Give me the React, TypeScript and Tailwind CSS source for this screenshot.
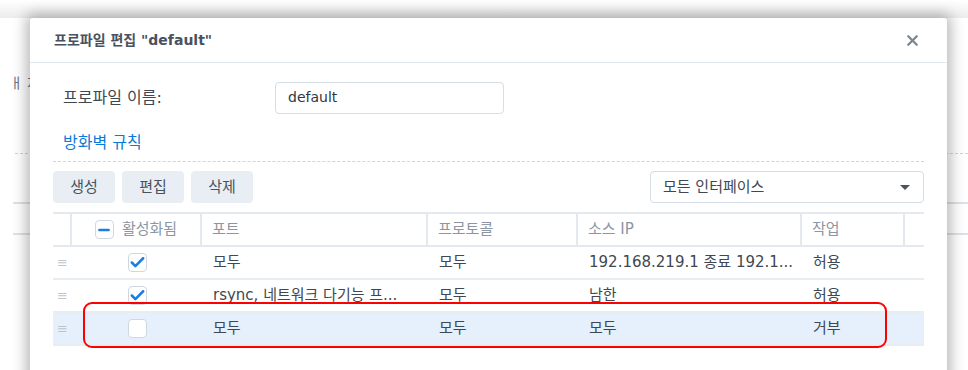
import React from "react";
import { X, Check, Minus } from "lucide-react";

const font = {
  fontFamily: '"DejaVu Sans", "Noto Sans CJK KR", sans-serif',
};

const rows = [
  {
    id: 1,
    checked: true,
    port: "모두",
    protocol: "모두",
    source: "192.168.219.1 종료 192.1...",
    action: "허용",
    selected: false,
  },
  {
    id: 2,
    checked: true,
    port: "rsync, 네트워크 다기능 프...",
    protocol: "모두",
    source: "남한",
    action: "허용",
    selected: false,
  },
  {
    id: 3,
    checked: false,
    port: "모두",
    protocol: "모두",
    source: "모두",
    action: "거부",
    selected: true,
  },
];

function CheckBox({ state }: { state: "on" | "off" | "some" }) {
  return (
    <div className="w-[19px] h-[19px] rounded-[4px] border border-[#cfd8e2] bg-white flex items-center justify-center">
      {state === "on" && (
        <Check className="w-[17px] h-[17px] text-[#1a7ee0]" strokeWidth={3.6} />
      )}
      {state === "some" && (
        <Minus className="w-[16px] h-[16px] text-[#1a7ee0]" strokeWidth={3.6} />
      )}
    </div>
  );
}

export default function App() {
  return (
    <div
      className="relative w-[968px] h-[370px] overflow-hidden bg-white text-[#3e4752]"
      style={font}
    >
      {/* Page behind the dialog */}
      <div className="flex flex-col h-full">
        <div className="h-[18px] bg-gradient-to-b from-white to-[#ececec]" />
        <div className="pl-[10px] pt-[55px] text-[14px] leading-[20px] text-[#6b7480]">ㅐ 자</div>
        <div className="mt-[60px] ml-[15px] border-t border-dashed border-[#cdd3da]" />
        <div className="mt-[48px] ml-[13px] border-t-2 border-[#dde2e8]" />
        <div className="mt-[29px] ml-[13px] border-t-2 border-[#dde2e8]" />
      </div>

      {/* Dialog */}
      <div className="absolute left-[30px] top-[18px] w-[917px] h-[380px] bg-white rounded-t-[3px] shadow-[0_0_14px_4px_rgba(0,0,0,0.28)] flex flex-col">
        {/* Header */}
        <div className="h-[45px] shrink-0 border-b border-[#e2e8ef] flex items-center justify-between pl-[24px] pr-[26px]">
          <span className="text-[14px] font-semibold text-[#48525e]">
            프로파일 편집 <span className="font-bold">"default"</span>
          </span>
          <X className="w-[17px] h-[17px] text-[#7c8590]" strokeWidth={3.2} />
        </div>

        {/* Body */}
        <div className="px-[23px] pt-[19px] flex flex-col">
          <div className="flex items-center h-[31px]">
            <span className="ml-[10px] w-[212px] text-[16px] text-[#3e4752]">
              프로파일 이름:
            </span>
            <div className="w-[229px] h-[32px] border border-[#d5dde6] rounded-[4px] flex items-center pl-[12px] text-[14px] text-[#2f3842]">
              default
            </div>
          </div>

          <div className="mt-[18px] pl-[10px] pb-[6px] border-b border-dashed border-[#cdd4dc]">
            <span className="text-[16px] leading-[24px] text-[#0a7ad6]">방화벽 규칙</span>
          </div>

          <div className="mt-[9px] flex items-center justify-between h-[32px]">
            <div className="flex gap-[7px]">
              {["생성", "편집", "삭제"].map((b) => (
                <button
                  key={b}
                  className="w-[62px] h-[32px] rounded-[4px] bg-[#e9eef4] text-[15px] text-[#48525e]"
                >
                  {b}
                </button>
              ))}
            </div>
            <div className="w-[274px] h-[32px] border border-[#d5dde6] rounded-[4px] flex items-center justify-between pl-[12px] pr-[13px] text-[15px] text-[#3e4752]">
              <span>모든 인터페이스</span>
              <span className="w-0 h-0 border-l-[5px] border-r-[5px] border-t-[5px] border-l-transparent border-r-transparent border-t-[#4a525c]" />
            </div>
          </div>

          {/* Table */}
          <div className="mt-[9px] border-t-2 border-[#e3e9ef] text-[15px]">
            <div className="flex h-[33px] border-b-2 border-[#e3e9ef] text-[#8c96a2]">
              <div className="w-[19px] border-r-2 border-[#e3e9ef]" />
              <div className="w-[130px] border-r-2 border-[#e3e9ef] flex items-center justify-center gap-[8px]">
                <CheckBox state="some" />
                <span>활성화됨</span>
              </div>
              <div className="w-[226px] border-r-2 border-[#e3e9ef] flex items-center pl-[10px]">
                포트
              </div>
              <div className="w-[150px] border-r-2 border-[#e3e9ef] flex items-center pl-[10px]">
                프로토콜
              </div>
              <div className="w-[224px] border-r-2 border-[#e3e9ef] flex items-center pl-[10px]">
                소스 IP
              </div>
              <div className="w-[103px] border-r-2 border-[#e3e9ef] flex items-center pl-[10px]">
                작업
              </div>
              <div className="flex-1" />
            </div>

            {rows.map((r) => (
              <div
                key={r.id}
                className={`flex h-[33px] border-b-2 border-[#e8edf2] ${r.selected ? "bg-[#e5f0fc]" : "bg-white"}`}
              >
                <div className="w-[19px] flex items-center justify-center text-[#bcc4cd] text-[13px]">
                  ≡
                </div>
                <div className="w-[130px] flex items-center justify-center">
                  <CheckBox state={r.checked ? "on" : "off"} />
                </div>
                <div className="w-[226px] flex items-center pl-[11px] whitespace-nowrap overflow-hidden">
                  {r.port}
                </div>
                <div className="w-[150px] flex items-center pl-[11px]">{r.protocol}</div>
                <div className="w-[224px] flex items-center pl-[11px] whitespace-nowrap overflow-hidden">
                  {r.source}
                </div>
                <div className="w-[103px] flex items-center pl-[11px]">{r.action}</div>
                <div className="flex-1" />
              </div>
            ))}
          </div>
        </div>
      </div>

      {/* Annotation */}
      <div className="absolute left-[83px] top-[302px] w-[804px] h-[46px] rounded-[9px] border-2 border-[#ff0000]" />
    </div>
  );
}
